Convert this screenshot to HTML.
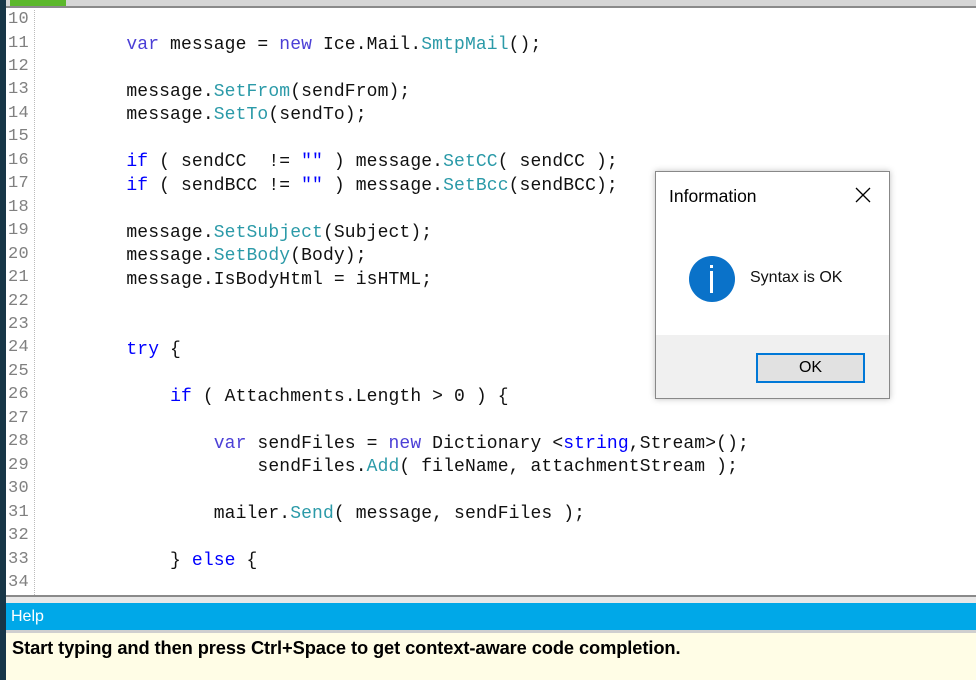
<!DOCTYPE html>
<html><head><meta charset="utf-8"><style>
*{margin:0;padding:0;box-sizing:border-box}
body{width:976px;height:680px;overflow:hidden;background:#fff;position:relative;font-family:"Liberation Sans",sans-serif}
#lstrip{position:absolute;left:0;top:0;width:6px;height:680px;background:#173647}
#top{position:absolute;left:6px;top:0;width:970px;height:8px;background:#d6d6d6;border-bottom:2px solid #8a8a8a}
#tab{position:absolute;left:4px;top:0;width:56px;height:6px;background:#5cb82c}
#gut{position:absolute;left:6px;top:10px;width:29px;height:585px;border-right:1px dotted #bbb}
.l{position:absolute;left:0;height:23.46px;line-height:23.46px;white-space:pre;font-family:"Liberation Mono",monospace}
.n{left:8px;font-size:17px;color:#808080;letter-spacing:0.3px}
.c{left:39px;font-size:18px;color:#111;letter-spacing:0.12px}
.k{color:#0000ff}.v{color:#4b3fd6}.m{color:#2b9aa8}
#sep{position:absolute;left:6px;top:595px;width:970px;height:8px;background:#e8e8e8;border-top:2px solid #8a8a8a}
#help{position:absolute;left:6px;top:603px;width:970px;height:27px;background:#00a8e8;color:#fff;font-size:16px;line-height:28px;padding-left:5px}
#hb{position:absolute;left:6px;top:630px;width:970px;height:50px;background:#fffde6;border-top:3px solid #cfcfcf;font-weight:bold;font-size:18.3px;padding:4px 0 0 6px;color:#000;letter-spacing:-0.1px}
#dlg{position:absolute;left:655px;top:171px;width:235px;height:228px;background:#fff;border:1px solid #888;box-shadow:0 0 6px rgba(0,0,0,.25)}
#dlg .t{position:absolute;left:13px;top:14px;font-size:17.5px;color:#000}
#dlg .x{position:absolute;left:198px;top:14px}
#dlg .ic{position:absolute;left:33px;top:84px;width:46px;height:46px;border-radius:50%;background:#0a72c9}
#dlg .ic i{position:absolute;left:21px;top:15px;width:3px;height:22px;background:#fff}
#dlg .ic b{position:absolute;left:21px;top:9px;width:3px;height:3px;background:#fff}
#dlg .msg{position:absolute;left:94px;top:97px;font-size:16px;color:#111}
#dlg .bot{position:absolute;left:0;top:163px;width:233px;height:63px;background:#f0f0f0}
#dlg .ok{position:absolute;left:100px;top:181px;width:109px;height:30px;border:2px solid #0078d7;background:#e1e1e1;text-align:center;line-height:26px;font-size:16px;color:#000}
</style></head><body>
<div id="lstrip"></div>
<div id="top"><div id="tab"></div></div>
<div id="gut"></div>
<div class="l n" style="top:8px">10</div>
<div class="l n" style="top:31.5px">11</div>
<div class="l n" style="top:54.9px">12</div>
<div class="l n" style="top:78.4px">13</div>
<div class="l n" style="top:101.8px">14</div>
<div class="l n" style="top:125.3px">15</div>
<div class="l n" style="top:148.8px">16</div>
<div class="l n" style="top:172.2px">17</div>
<div class="l n" style="top:195.7px">18</div>
<div class="l n" style="top:219.1px">19</div>
<div class="l n" style="top:242.6px">20</div>
<div class="l n" style="top:266.1px">21</div>
<div class="l n" style="top:289.5px">22</div>
<div class="l n" style="top:313px">23</div>
<div class="l n" style="top:336.4px">24</div>
<div class="l n" style="top:359.9px">25</div>
<div class="l n" style="top:383.4px">26</div>
<div class="l n" style="top:406.8px">27</div>
<div class="l n" style="top:430.3px">28</div>
<div class="l n" style="top:453.7px">29</div>
<div class="l n" style="top:477.2px">30</div>
<div class="l n" style="top:500.7px">31</div>
<div class="l n" style="top:524.1px">32</div>
<div class="l n" style="top:547.6px">33</div>
<div class="l n" style="top:571px">34</div>

<div class="l c" style="top:34px">        <span class="v">var</span> message = <span class="v">new</span> Ice.Mail.<span class="m">SmtpMail</span>();</div>
<div class="l c" style="top:80.9px">        message.<span class="m">SetFrom</span>(sendFrom);</div>
<div class="l c" style="top:104.3px">        message.<span class="m">SetTo</span>(sendTo);</div>
<div class="l c" style="top:151.3px">        <span class="k">if</span> ( sendCC  != <span class="k">""</span> ) message.<span class="m">SetCC</span>( sendCC );</div>
<div class="l c" style="top:174.7px">        <span class="k">if</span> ( sendBCC != <span class="k">""</span> ) message.<span class="m">SetBcc</span>(sendBCC);</div>
<div class="l c" style="top:221.6px">        message.<span class="m">SetSubject</span>(Subject);</div>
<div class="l c" style="top:245.1px">        message.<span class="m">SetBody</span>(Body);</div>
<div class="l c" style="top:268.6px">        message.IsBodyHtml = isHTML;</div>
<div class="l c" style="top:338.9px">        <span class="k">try</span> {</div>
<div class="l c" style="top:385.9px">            <span class="k">if</span> ( Attachments.Length &gt; 0 ) {</div>
<div class="l c" style="top:432.8px">                <span class="v">var</span> sendFiles = <span class="v">new</span> Dictionary &lt;<span class="k">string</span>,Stream&gt;();</div>
<div class="l c" style="top:456.2px">                    sendFiles.<span class="m">Add</span>( fileName, attachmentStream );</div>
<div class="l c" style="top:503.2px">                mailer.<span class="m">Send</span>( message, sendFiles );</div>
<div class="l c" style="top:550.1px">            } <span class="k">else</span> {</div>

<div id="sep"></div>
<div id="help">Help</div>
<div id="hb">Start typing and then press Ctrl+Space to get context-aware code completion.</div>

<div id="dlg">
<div class="t">Information</div>
<svg class="x" width="18" height="18" viewBox="0 0 18 18"><path d="M2 2L16 16M16 2L2 16" stroke="#000" stroke-width="1.3"/></svg>
<div class="ic"><b></b><i></i></div>
<div class="msg">Syntax is OK</div>
<div class="bot"></div>
<div class="ok">OK</div>
</div>
</body></html>
